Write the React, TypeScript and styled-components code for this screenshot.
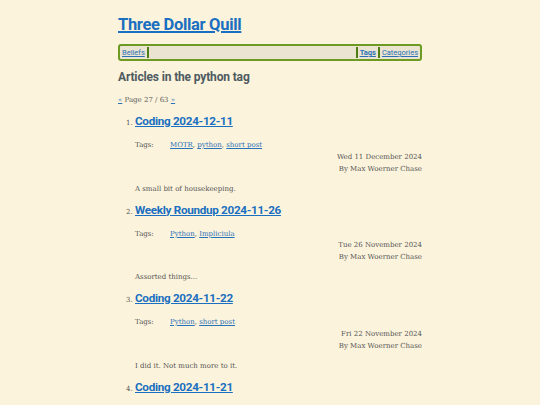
import React from "react";
import styled, { createGlobalStyle } from "styled-components";

const GlobalStyle = createGlobalStyle`
  html, body {
    margin: 0;
    padding: 0;
    background: #fcf3dc;
  }
  body {
    font-family: "DejaVu Serif", serif;
    color: #555;
  }
`;

const HEAD_FONT = `Roboto, "Open Sans", sans-serif`;

const Page = styled.div`
  width: 304px;
  margin: 0 auto;
  padding-top: 14px;
`;

const SiteTitle = styled.h1`
  margin: 0;
  font-family: ${HEAD_FONT};
  font-size: 16.5px;
  line-height: 22px;
  font-weight: 700;
  letter-spacing: -0.3px;
  a {
    color: #1a6fc0;
    text-decoration: underline;
    text-decoration-thickness: 1.5px;
  }
`;

const Nav = styled.nav`
  margin-top: 8px;
  height: 11px;
  display: flex;
  align-items: stretch;
  background: #ebe4d0;
  border: 2px solid #6c9a22;
  border-radius: 3px;
  padding: 1px 0;
  font-family: ${HEAD_FONT};
  font-size: 7.5px;
  line-height: 11px;
`;

const NavLink = styled.a<{ $bold?: boolean }>`
  color: #2a72b8;
  text-decoration: underline;
  font-weight: ${(p) => (p.$bold ? 700 : 400)};
  padding: 0 2px;
`;

const NavSep = styled.span`
  width: 2px;
  background: #4e7d14;
`;

const NavFill = styled.div`
  flex: 1;
`;

const SectionTitle = styled.h2`
  margin: 7px 0 0;
  font-family: ${HEAD_FONT};
  font-size: 12px;
  line-height: 18px;
  font-weight: 700;
  letter-spacing: -0.15px;
  color: #4d5a61;
`;

const Pager = styled.div`
  margin-top: 8px;
  font-size: 7px;
  line-height: 12px;
  color: #5a5a5a;
  a {
    color: #2a72b8;
  }
`;

const List = styled.ol`
  margin: 4px 0 0;
  padding-left: 17px;
`;

const Item = styled.li`
  font-size: 7px;
  color: #555;
  margin-bottom: 4px;
  &::marker {
    font-size: 7px;
  }
`;

const ItemTitle = styled.a`
  display: inline-block;
  font-family: ${HEAD_FONT};
  font-size: 11.7px;
  line-height: 22px;
  font-weight: 700;
  letter-spacing: -0.3px;
  color: #1a6fc0;
  text-decoration: underline;
`;

const Meta = styled.div`
  margin-top: 7px;
  display: grid;
  grid-template-columns: 35px 1fr;
  line-height: 12px;
`;

const TagLink = styled.a`
  color: #2a72b8;
  text-decoration: underline;
`;

const Byline = styled.div`
  margin-top: -0.5px;
  text-align: right;
  line-height: 12px;
`;

const Summary = styled.p`
  margin: 8px 0 0;
  line-height: 12px;
`;

type Article = {
  title: string;
  tags: string[];
  date: string;
  summary: string;
};

const articles: Article[] = [
  {
    title: "Coding 2024-12-11",
    tags: ["MOTR", "python", "short post"],
    date: "Wed 11 December 2024",
    summary: "A small bit of housekeeping.",
  },
  {
    title: "Weekly Roundup 2024-11-26",
    tags: ["Python", "Impliciula"],
    date: "Tue 26 November 2024",
    summary: "Assorted things...",
  },
  {
    title: "Coding 2024-11-22",
    tags: ["Python", "short post"],
    date: "Fri 22 November 2024",
    summary: "I did it. Not much more to it.",
  },
  {
    title: "Coding 2024-11-21",
    tags: ["python", "short post"],
    date: "Thu 21 November 2024",
    summary: "Stuff.",
  },
];

const App = (): JSX.Element => {
  return (
    <React.Fragment>
      <GlobalStyle />
      <Page>
        <SiteTitle>
          <a href="#">Three Dollar Quill</a>
        </SiteTitle>
        <Nav>
          <NavLink href="#">Beliefs</NavLink>
          <NavSep />
          <NavFill />
          <NavSep />
          <NavLink href="#" $bold>
            Tags
          </NavLink>
          <NavSep />
          <NavLink href="#">Categories</NavLink>
        </Nav>
        <SectionTitle>Articles in the python tag</SectionTitle>
        <Pager>
          <a href="#">«</a> Page 27 / 63 <a href="#">»</a>
        </Pager>
        <List>
          {articles.map((a) => (
            <Item key={a.title}>
              <ItemTitle href="#">{a.title}</ItemTitle>
              <Meta>
                <span>Tags:</span>
                <span>
                  {a.tags.map((t, i) => (
                    <React.Fragment key={t}>
                      <TagLink href="#">{t}</TagLink>
                      {i < a.tags.length - 1 ? ", " : ""}
                    </React.Fragment>
                  ))}
                </span>
              </Meta>
              <Byline>
                {a.date}
                <br />
                By Max Woerner Chase
              </Byline>
              <Summary>{a.summary}</Summary>
            </Item>
          ))}
        </List>
      </Page>
    </React.Fragment>
  );
};

export default App;
